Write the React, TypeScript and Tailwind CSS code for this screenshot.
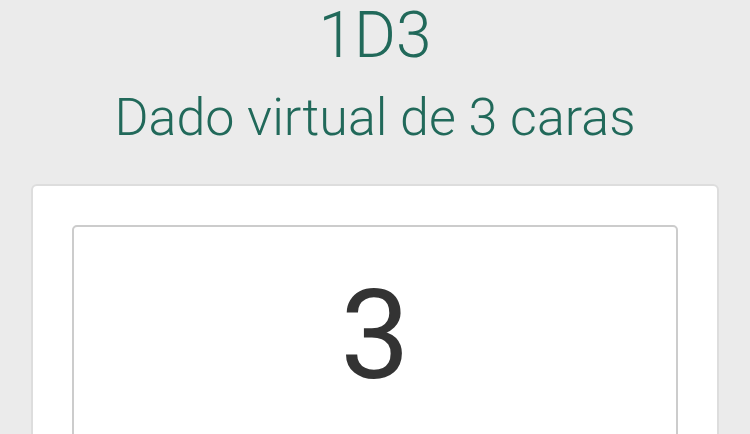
import React from 'react';

export default function App() {
  return (
    <div className="min-h-screen bg-[#ebebeb] font-['Roboto',sans-serif] overflow-hidden">
      <header className="text-center text-[#21695a] font-light">
        <h1 className="text-[64px] leading-[1.1] pt-px">1D3</h1>
        <h2 className="text-[52px] leading-none mt-[21px]">Dado virtual de 3 caras</h2>
      </header>
      <main className="mx-[31px] mt-[40px] bg-white border-2 border-[#dddddd] rounded-[6px] px-[39px] pt-[39px]">
        <div className="border-2 border-[#cccccc] rounded-[5px] h-[300px] flex justify-center">
          <span className="text-[124px] leading-none text-[#333333] mt-[47px]">3</span>
        </div>
      </main>
    </div>
  );
}
